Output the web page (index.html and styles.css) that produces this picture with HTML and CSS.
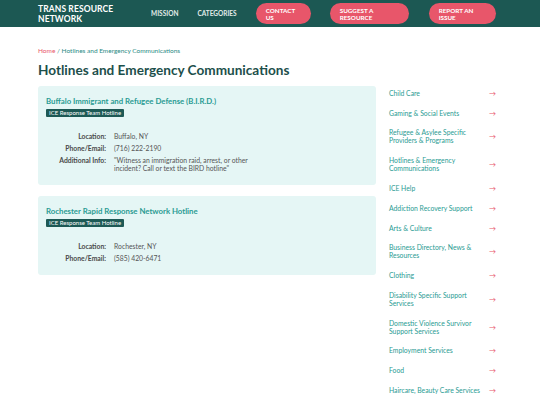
FILE: index.html
```html
<!DOCTYPE html>
<html lang="en">
<head>
<meta charset="utf-8">
<title>Hotlines and Emergency Communications</title>
<link rel="stylesheet" href="styles.css">
</head>
<body>
<header class="topbar">
  <div class="topbar-inner">
    <a class="logo" href="#">TRANS RESOURCE<br>NETWORK</a>
    <nav class="nav">
      <a class="nav-link" href="#">MISSION</a>
      <a class="nav-link" href="#">CATEGORIES</a>
      <a class="btn btn-contact" href="#">CONTACT<br>US</a>
      <a class="btn btn-suggest" href="#">SUGGEST A<br>RESOURCE</a>
      <a class="btn btn-report" href="#">REPORT AN<br>ISSUE</a>
    </nav>
  </div>
</header>
<main class="page">
  <div class="crumbs"><a class="crumb-home" href="#">Home</a> / Hotlines and Emergency Communications</div>
  <h1 class="title">Hotlines and Emergency Communications</h1>
  <div class="layout">
    <section class="cards">
      <article class="card">
        <h2 class="card-title">Buffalo Immigrant and Refugee Defense (B.I.R.D.)</h2>
        <span class="tag">ICE Response Team Hotline</span>
        <dl class="info">
          <dt>Location:</dt><dd>Buffalo, NY</dd>
          <dt>Phone/Email:</dt><dd>(716) 222-2190</dd>
          <dt>Additional Info:</dt><dd>"Witness an immigration raid, arrest, or other incident? Call or text the BIRD hotline"</dd>
        </dl>
      </article>
      <article class="card">
        <h2 class="card-title">Rochester Rapid Response Network Hotline</h2>
        <span class="tag">ICE Response Team Hotline</span>
        <dl class="info">
          <dt>Location:</dt><dd>Rochester, NY</dd>
          <dt>Phone/Email:</dt><dd>(585) 420-6471</dd>
        </dl>
      </article>
    </section>
    <aside class="sidebar">
      <a class="side-item" href="#"><span>Child Care</span><span class="arrow">→</span></a>
      <a class="side-item" href="#"><span>Gaming &amp; Social Events</span><span class="arrow">→</span></a>
      <a class="side-item" href="#"><span>Refugee &amp; Asylee Specific Providers &amp; Programs</span><span class="arrow">→</span></a>
      <a class="side-item" href="#"><span>Hotlines &amp; Emergency Communications</span><span class="arrow">→</span></a>
      <a class="side-item" href="#"><span>ICE Help</span><span class="arrow">→</span></a>
      <a class="side-item" href="#"><span>Addiction Recovery Support</span><span class="arrow">→</span></a>
      <a class="side-item" href="#"><span>Arts &amp; Culture</span><span class="arrow">→</span></a>
      <a class="side-item" href="#"><span>Business Directory, News &amp; Resources</span><span class="arrow">→</span></a>
      <a class="side-item" href="#"><span>Clothing</span><span class="arrow">→</span></a>
      <a class="side-item" href="#"><span>Disability Specific Support Services</span><span class="arrow">→</span></a>
      <a class="side-item" href="#"><span>Domestic Violence Survivor Support Services</span><span class="arrow">→</span></a>
      <a class="side-item" href="#"><span>Employment Services</span><span class="arrow">→</span></a>
      <a class="side-item" href="#"><span>Food</span><span class="arrow">→</span></a>
      <a class="side-item" href="#"><span>Haircare, Beauty Care Services</span><span class="arrow">→</span></a>
    </aside>
  </div>
</main>
</body>
</html>
```
FILE: styles.css
```css
* { box-sizing: border-box; }
html, body { margin: 0; padding: 0; }
body {
  font-family: Lato, "Noto Sans", sans-serif;
  background: #ffffff;
  color: #444;
  overflow: hidden;
}
a { text-decoration: none; }

.topbar {
  background: #1c5853;
  height: 27px;
}
.topbar-inner {
  display: flex;
  align-items: center;
  height: 100%;
  padding: 0 38px;
}
.logo {
  color: #ffffff;
  font-weight: 700;
  font-size: 8.5px;
  line-height: 10px;
  letter-spacing: 0.1px;
  width: 113px;
}
.nav {
  display: flex;
  align-items: center;
}
.nav-link {
  color: #e3ecea;
  font-weight: 700;
  font-size: 6.5px;
  margin-right: 19px;
}
.btn {
  display: flex;
  align-items: center;
  height: 21px;
  border-radius: 11px;
  background: #e8566a;
  color: #ffffff;
  font-weight: 700;
  font-size: 6.3px;
  line-height: 7px;
  padding: 0 10px;
}
.btn-contact { width: 55px; margin-left: 0; }
.btn-suggest { width: 79px; margin-left: 19px; }
.btn-report { width: 67px; margin-left: 20px; }

.page {
  padding: 0 38px;
}
.crumbs {
  margin-top: 20px;
  font-size: 6.5px;
  line-height: 8px;
  color: #2a8a84;
}
.crumb-home { color: #e8566a; }
.title {
  margin: 6px 0 0;
  font-size: 13.6px;
  line-height: 18px;
  font-weight: 700;
  color: #1d4f4b;
}
.layout {
  display: grid;
  grid-template-columns: 338px 1fr;
  column-gap: 13px;
  margin-top: 7px;
}
.cards {
  display: flex;
  flex-direction: column;
  gap: 11px;
}
.card {
  background: #e5f6f5;
  border-radius: 3px;
  padding: 10px 8px 13px;
}
.card-title {
  margin: 0;
  font-size: 7.8px;
  line-height: 11px;
  font-weight: 700;
  color: #2a9b93;
}
.tag {
  display: block;
  width: fit-content;
  margin-top: 2px;
  background: #1d5955;
  color: #ffffff;
  font-size: 6px;
  line-height: 8px;
  padding: 0 3px;
  border-radius: 1px;
}
.info {
  display: grid;
  grid-template-columns: 60px 1fr;
  column-gap: 8px;
  row-gap: 4px;
  margin: 15px 0 0;
  font-size: 6.8px;
  line-height: 8px;
}
.info dt {
  text-align: right;
  font-weight: 700;
  color: #4a4a4a;
}
.info dd {
  margin: 0;
  color: #555;
  max-width: 145px;
}

.sidebar {
  display: flex;
  flex-direction: column;
  margin-top: -3px;
}
.side-item {
  display: flex;
  align-items: center;
  justify-content: space-between;
  padding: 5.9px 0;
  font-size: 6.8px;
  line-height: 8px;
  color: #2a9b93;
}
.side-item span:first-child { max-width: 96px; }
.arrow {
  color: #e8566a;
  font-size: 7px;
  line-height: 8px;
  margin-right: 6px;
}
```
